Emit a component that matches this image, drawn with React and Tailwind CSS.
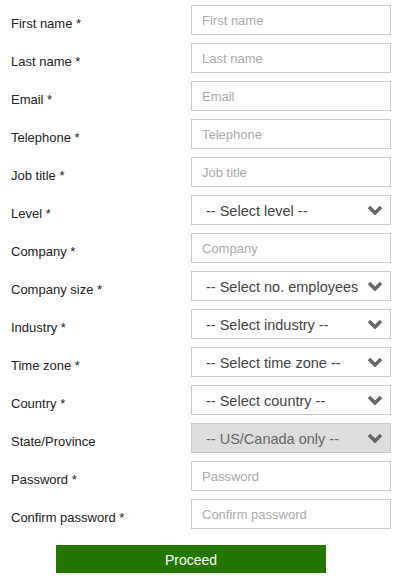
import { useState } from 'react';

const fields = [
    { label: 'First name *', placeholder: 'First name' },
    { label: 'Last name *', placeholder: 'Last name' },
    { label: 'Email *', placeholder: 'Email' },
    { label: 'Telephone *', placeholder: 'Telephone' },
    { label: 'Job title *', placeholder: 'Job title' },
    { label: 'Level *', select: '-- Select level --' },
    { label: 'Company *', placeholder: 'Company' },
    { label: 'Company size *', select: '-- Select no. employees --' },
    { label: 'Industry *', select: '-- Select industry --' },
    { label: 'Time zone *', select: '-- Select time zone --' },
    { label: 'Country *', select: '-- Select country --' },
    { label: 'State/Province', select: '-- US/Canada only --', disabled: true },
    { label: 'Password *', placeholder: 'Password', type: 'password' },
    { label: 'Confirm password *', placeholder: 'Confirm password', type: 'password' },
];

function Chevron() {
    return (
        <svg width="16" height="10" viewBox="0 0 16 10" className="shrink-0">
            <path d="M2 2 L8 8 L14 2" fill="none" stroke="#666" strokeWidth="3.5" />
        </svg>
    );
}

function SelectBox({ text, disabled }) {
    return (
        <div
            className={`flex h-[30px] w-[200px] items-center overflow-hidden border border-[#ccc] pl-[14px] pr-[7px] ${disabled ? 'bg-[#ddd]' : 'bg-white'}`}
        >
            <span className={`flex-1 overflow-hidden whitespace-nowrap pt-[3px] text-[14.5px] ${disabled ? 'text-[#666]' : 'text-[#444]'}`}>
                {text}
            </span>
            <div className={`z-10 flex h-full items-center pl-[4px] ${disabled ? 'bg-[#ddd]' : 'bg-white'}`}>
                <Chevron />
            </div>
        </div>
    );
}

export default function App() {
    const [values, setValues] = useState({});

    return (
        <div className="w-[414px] bg-white pt-[5px] font-['Liberation_Sans',Arial,sans-serif] text-[13px] text-[#222]">
            <div className="flex flex-col gap-[8px]">
                {fields.map((f) => (
                    <div key={f.label} className="flex items-center">
                        <label className="w-[191px] pl-[11px] pt-[8px]">{f.label}</label>
                        {f.select ? (
                            <SelectBox text={f.select} disabled={f.disabled} />
                        ) : (
                            <input
                                type={f.type || 'text'}
                                placeholder={f.placeholder}
                                value={values[f.label] || ''}
                                onChange={(e) => setValues({ ...values, [f.label]: e.target.value })}
                                className="h-[30px] w-[200px] border border-[#ccc] px-[10px] text-[13px] outline-none placeholder:text-[#aaa]"
                            />
                        )}
                    </div>
                ))}
            </div>
            <div className="mt-[16px] pl-[56px]">
                <button className="h-[28px] w-[270px] bg-[#237600] pt-[3px] text-[14px] text-white">Proceed</button>
            </div>
        </div>
    );
}
